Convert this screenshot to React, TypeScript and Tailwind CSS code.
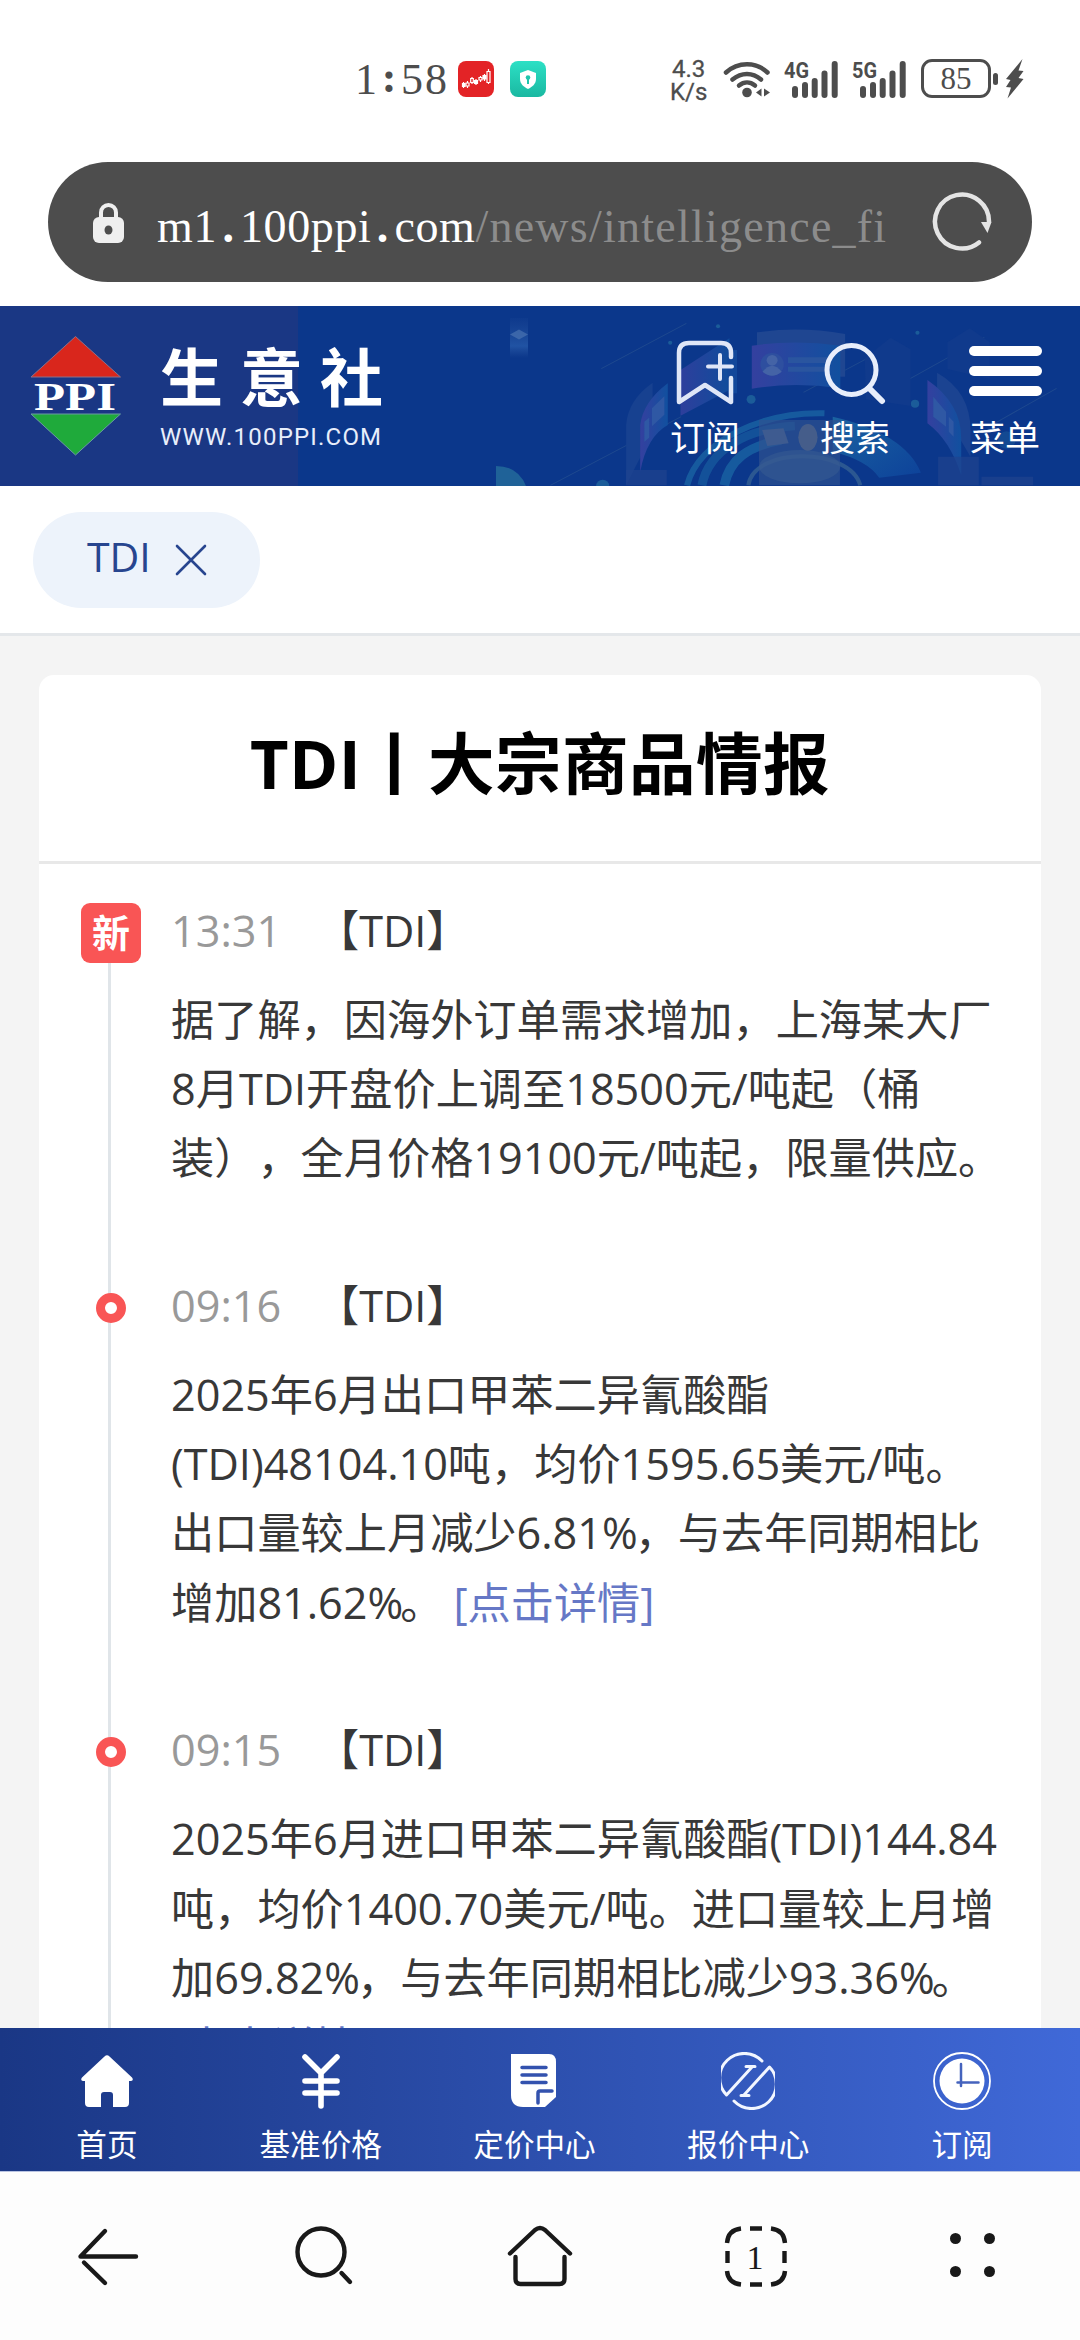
import { Fragment, type ReactNode } from 'react'

interface NewsItem {
  time: string
  isNew?: boolean
  lines: string[]
  link?: 'inline' | 'newline'
}

const NEWS: NewsItem[] = [
  {
    time: '13:31',
    isNew: true,
    lines: [
      '据了解，因海外订单需求增加，上海某大厂',
      '8月TDI开盘价上调至18500元/吨起（桶',
      '装），全月价格19100元/吨起，限量供应。',
    ],
  },
  {
    time: '09:16',
    lines: [
      '2025年6月出口甲苯二异氰酸酯',
      '(TDI)48104.10吨，均价1595.65美元/吨。',
      '出口量较上月减少6.81%，与去年同期相比',
      '增加81.62%。',
    ],
    link: 'inline',
  },
  {
    time: '09:15',
    lines: [
      '2025年6月进口甲苯二异氰酸酯(TDI)144.84',
      '吨，均价1400.70美元/吨。进口量较上月增',
      '加69.82%，与去年同期相比减少93.36%。',
    ],
    link: 'newline',
  },
]

function Signal({ label }: { label: string }) {
  return (
    <svg width="54" height="38" viewBox="0 0 54 38" fill="#4d4d4d">
      <text x="0" y="17" fontFamily="Roboto" fontSize="22" fontWeight="700" textLength="25" lengthAdjust="spacingAndGlyphs">
        {label}
      </text>
      <rect x="8" y="25" width="6" height="12" rx="3" />
      <rect x="18" y="21" width="6" height="16" rx="3" />
      <rect x="27.7" y="17" width="6" height="20" rx="3" />
      <rect x="37.5" y="9.5" width="6" height="27.5" rx="3" />
      <rect x="47.7" y="0" width="6" height="37" rx="3" />
    </svg>
  )
}

function StatusBar() {
  return (
    <div className="flex h-[162px] shrink-0 items-start pt-[58px] text-[#4d4d4d]">
      <div className="ml-[355px] flex h-[44px] w-[103px] items-center font-['Liberation_Serif',serif] text-[44px] leading-none">
        <span className="w-[22px]">1</span>
        <span className="w-[24px] pb-1 text-center font-bold">:</span>
        <span className="tracking-[2px]">58</span>
      </div>
      <svg className="mt-[3px]" width="36" height="36" viewBox="0 0 36 36">
        <rect width="36" height="36" rx="8" fill="#e32326" />
        <g fill="none" stroke="#fff" strokeWidth="1.2">
          <path d="M5.5 21v6M9.500 20v7M14 16v7M18 18v6M22.500 15v6M26.500 13v7M30.500 8v15" />
          <path d="M8 22h3v3H8zM12.700 17.500h2.600v4h-2.600zM21 16.500h3v2.500h-3zM29 10.500h3v11h-3z" fill="#e32326" />
          <path d="M4.500 22.500h2.500v3H4.500zM16.500 19.500h3v3h-3zM25 14.500h3v3.500h-3z" fill="#fff" />
        </g>
      </svg>
      <svg className="mt-[3px] ml-4" width="36" height="36" viewBox="0 0 36 36">
        <defs>
          <linearGradient id="shield" x1="0" y1="0" x2="0" y2="1">
            <stop offset="0" stopColor="#2ce0c5" />
            <stop offset="1" stopColor="#1ab8a1" />
          </linearGradient>
        </defs>
        <rect width="36" height="36" rx="8" fill="url(#shield)" />
        <path d="M18 9l8 3v6c0 5-4 8-8 10-4-2-8-5-8-10v-6z" fill="#fff" />
        <circle cx="18" cy="16.5" r="2.3" fill="#1fc5ad" />
        <rect x="17" y="17" width="2" height="6" fill="#1fc5ad" />
      </svg>
      <div className="ml-[124px] w-[42px] font-[Roboto,sans-serif] text-[24px] leading-[23px] [-webkit-text-stroke:0.3px_#4d4d4d]">
        <div className="pl-[2px]">4.3</div>
        <div>K/s</div>
      </div>
      <svg className="mt-[3px] ml-[11px]" width="48" height="38" viewBox="0 0 48 38" fill="none" stroke="#4d4d4d" strokeWidth="4.5" strokeLinecap="round">
        <path d="M3 11.500C15 .500 33 .500 44.500 11.500" />
        <path d="M9.500 18.500c9-7.500 20-7.500 28.500 0" />
        <path d="M16 24.500c5-4 11-4 16 0" />
        <circle cx="24" cy="31.5" r="4.8" fill="#4d4d4d" stroke="none" />
        <path d="M38.500 27.500v8l-5.500-4zM41 27.500v8l6-4z" fill="#4d4d4d" stroke="none" />
      </svg>
      <div className="mt-[3px] ml-[13px]">
        <Signal label="4G" />
      </div>
      <div className="mt-[3px] ml-[14px]">
        <Signal label="5G" />
      </div>
      <div className="mt-px ml-[15px] flex h-[39px] w-[70px] items-center justify-center rounded-[11px] border-[3px] border-[#4d4d4d] font-['Liberation_Serif',serif] text-[31px] leading-none">
        85
      </div>
      <div className="mt-[15px] ml-[2px] h-[12px] w-[5px] rounded-full bg-[#4d4d4d]" />
      <svg className="ml-[7px]" width="19" height="41" viewBox="0 0 19 41" fill="#4d4d4d">
        <path d="M17.500 1L1 21l4.500 1L1 29l5 .500L2.500 40.500 18.500 21l-5-1 5-7-5-.500z" />
      </svg>
    </div>
  )
}

function AddressBar() {
  return (
    <div className="mx-12 flex h-[120px] shrink-0 items-center rounded-full bg-[#4d4d4d]">
      <svg className="mt-[1px] ml-[45px]" width="31" height="40" viewBox="0 0 31 40">
        <path d="M8 16V9.500a7.500 7.500 0 0 1 15 0V16" fill="none" stroke="#efefef" strokeWidth="4" />
        <rect x="0" y="14" width="31" height="26" rx="6" fill="#efefef" />
        <ellipse cx="15.5" cy="27" rx="4" ry="4.5" fill="#4d4d4d" />
      </svg>
      <div className="mt-[10px] ml-[33px] flex w-[774px] font-['Liberation_Serif',serif] text-[46px] leading-none whitespace-nowrap">
        <span className="tracking-[0.6px] text-white">
          m1<span className="inline-block w-[23px] text-center font-bold">.</span>100ppi
          <span className="inline-block w-[23px] text-center font-bold">.</span>com
        </span>
        <span className="tracking-[1.25px] text-[#8c8c8c]">/news/intelligence_fi</span>
      </div>
      <svg className="-mt-px" width="62" height="62" viewBox="0 0 62 62">
        <path d="M48 51.500A27 27 0 1 1 58 31" fill="none" stroke="#e4e4e4" strokeWidth="4.5" strokeLinecap="round" />
        <path d="M50 31h10.500l-4 11z" fill="#e4e4e4" />
      </svg>
    </div>
  )
}

// faint illustration behind the right half of the site header
function HeaderArt() {
  return (
    <svg className="absolute top-0 right-0" width="540" height="180" viewBox="0 18 1568 540" preserveAspectRatio="none">
      <defs>
        <linearGradient id="screen" x1="0" y1="0" x2="1" y2="0">
          <stop offset="0" stopColor="#34409f" />
          <stop offset="1" stopColor="#11509f" />
        </linearGradient>
        <linearGradient id="wing" x1="0" y1="0" x2="1" y2="1">
          <stop offset="0" stopColor="#1a62a0" />
          <stop offset="1" stopColor="#0d429a" />
        </linearGradient>
      </defs>
      <g stroke="#2b5592" strokeWidth="3" opacity=".6">
        <path d="M178 206L425 70M30 556L410 350M765 277L1010 142M1050 250L1290 112M1320 370L1500 265" />
      </g>
      <path d="M630 97Q755 78 886 102V230H630z" fill="#1f4691" />
      <path d="M615 137Q740 118 872 137V265Q740 245 615 266z" fill="url(#screen)" />
      <circle cx="674" cy="193" r="34" fill="#2e4f9f" />
      <circle cx="674" cy="181" r="16" fill="#4463a6" />
      <path d="M646 215q28-36 56 0-28 24-56 0z" fill="#4463a6" />
      <path d="M720 172h120v17H720zM720 200h120v15H720z" fill="#2a559f" />
      <path d="M408 210L550 115V270L408 347z" fill="url(#screen)" opacity=".85" />
      <path d="M545 150h27v130h-27z" fill="#12479a" />
      <path d="M250 375Q255 300 327 248V400L250 556z" fill="#174190" />
      <path d="M291 375Q300 305 371 250V375Q310 410 291 515z" fill="url(#screen)" />
      <path d="M325 325l36-36v55l-36 35zM303 365l14-12v60l-14 12z" fill="#2f58a4" />
      <path d="M1153 218Q1250 275 1250 390V470L1153 300z" fill="#1b4391" />
      <path d="M1125 240Q1223 310 1223 415V525Q1190 420 1125 370z" fill="url(#screen)" />
      <path d="M1142 290l37 45v45l-37-30zM1187 350l14 15v45l-14-15z" fill="#2f58a4" />
      <g fill="none" stroke="#1961a2" opacity=".85">
        <path d="M826 340C650 335 460 420 427 556" strokeWidth="18" />
        <path d="M740 378C600 385 490 450 470 556" strokeWidth="26" opacity=".75" />
        <path d="M700 420C600 440 550 480 535 556" strokeWidth="28" />
        <path d="M605 556C620 440 900 440 930 556" strokeWidth="12" stroke="#315d93" />
      </g>
      <path d="M850 350Q1060 400 1106 518L985 533Q950 480 850 455z" fill="url(#wing)" />
      <path d="M636 360h235v196H636z" fill="#315391" opacity=".65" />
      <ellipse cx="754" cy="500" rx="118" ry="50" fill="#395d92" opacity=".5" />
      <ellipse cx="778" cy="412" rx="28" ry="40" fill="#4d638a" opacity=".8" />
      <path d="M645 390l62-5 15 45-62 8z" fill="#3e5b90" />
      <path d="M943 175l75-62 58 35v170l-130-20zM1183 127l65-42 58 42v110l-123-30z" fill="#103a8c" />
      <path d="M250 510h118v46H250zM1156 470h118v86h-118zM1282 530h150v26h-150z" fill="#1f438f" opacity=".7" />
      <g fill="#1b5c99">
        <circle cx="613" cy="298" r="13" />
        <circle cx="1089" cy="311" r="12" />
        <circle cx="182" cy="558" r="19" />
        <circle cx="517" cy="79" r="6" />
        <circle cx="378" cy="128" r="6" />
        <circle cx="1096" cy="98" r="6" />
        <circle cx="1355" cy="420" r="26" opacity=".5" />
      </g>
    </svg>
  )
}

function HeaderAction({ label, children }: { label: string; children: ReactNode }) {
  return (
    <button className="flex w-[150px] flex-col items-center">
      <span className="flex h-[68px] items-center">{children}</span>
      <span className="mt-[8px] text-[35px] leading-[46px] text-white">{label}</span>
    </button>
  )
}

function SiteHeader() {
  return (
    <header className="relative mt-6 flex h-[180px] shrink-0 overflow-hidden bg-[#0b378b]">
      <HeaderArt />
      <div className="absolute top-0 left-0 h-full w-[298px] bg-[#1a3784]" />
      <svg className="absolute top-0 left-[490px]" width="50" height="180" viewBox="0 0 50 180">
        <defs>
          <linearGradient id="beam" x1="0" y1="0" x2="0" y2="1">
            <stop offset="0" stopColor="#2a559f" stopOpacity="0.1" />
            <stop offset="0.7" stopColor="#2a5fae" stopOpacity="0.7" />
            <stop offset="1" stopColor="#2a559f" stopOpacity="0" />
          </linearGradient>
        </defs>
        <path d="M20 12h18v40H20z" fill="url(#beam)" />
        <path d="M20 28.500l9-5 9 5-9 5z" fill="#4a73b0" opacity=".7" />
        <path d="M6 160q22 0 30 20H6z" fill="#1f6298" />
      </svg>
      <svg className="relative mt-[30px] ml-[30px]" width="92" height="120" viewBox="0 0 92 120">
        <path d="M45.500 .500L90.500 41H1z" fill="#d9261c" stroke="#8d7089" strokeWidth="1" />
        <path d="M1 78h89.500L45.500 119z" fill="#1faa3b" stroke="#6c9aa5" strokeWidth="1" />
        <text x="4" y="74" fill="#fff" fontFamily="Liberation Serif" fontWeight="700" fontSize="41" textLength="82" lengthAdjust="spacingAndGlyphs">
          PPI
        </text>
      </svg>
      <div className="relative ml-[38px] w-[470px]">
        <div className="mt-[26px] text-[63px] leading-[90px] font-bold tracking-[17px] text-white">生意社</div>
        <div className="font-[Roboto,sans-serif] text-[24px] leading-[30px] tracking-[1.2px] text-[#e8eefb]">WWW.100PPI.COM</div>
      </div>
      <div className="relative mt-[33px] flex">
        <HeaderAction label="订阅">
          <svg width="60" height="68" viewBox="0 0 60 68" fill="none" stroke="#dfe6f7" strokeWidth="4.5" strokeLinecap="round" strokeLinejoin="round">
            <path d="M56 18v-4q0-10-10-10H14Q4 4 4 14v49l26-17 26 17V39" />
            <path d="M45 16v24M33 27.500h24" strokeWidth="4" />
          </svg>
        </HeaderAction>
        <HeaderAction label="搜索">
          <svg width="62" height="64" viewBox="0 0 62 64" fill="none" stroke="#e8eefb" strokeWidth="5" strokeLinecap="round">
            <circle cx="27.5" cy="29" r="24.5" />
            <path d="M45 47l13 13" strokeWidth="6" />
          </svg>
        </HeaderAction>
        <HeaderAction label="菜单">
          <span className="-mt-1 flex w-[73px] flex-col gap-[10px]">
            <span className="h-[10px] rounded-full bg-white" />
            <span className="h-[10px] rounded-full bg-white" />
            <span className="h-[10px] rounded-full bg-white" />
          </span>
        </HeaderAction>
      </div>
    </header>
  )
}

function FilterBar() {
  return (
    <div className="h-[150px] shrink-0 border-b-[3px] border-[#e4e7ea] bg-white pt-[26px] pl-[33px]">
      <button className="flex h-[96px] w-[227px] items-center rounded-full bg-[#edf3fb] pl-[54px] text-[41px] leading-none text-[#27458f]">
        <span className="-mt-[7px] w-[88px] text-left">TDI</span>
        <svg width="32" height="32" viewBox="0 0 32 32" stroke="#27458f" strokeWidth="2.6" strokeLinecap="round">
          <path d="M2 2l28 28M30 2L2 30" />
        </svg>
      </button>
    </div>
  )
}

function DetailLink() {
  return <a className="text-[#6678c6]">[点击详情]</a>
}

// the percent sign of the Latin font is too wide beside CJK text, so it is tightened
function NewsLine({ text }: { text: string }) {
  return text.split('%').map((part, i) => (
    <Fragment key={i}>
      {i > 0 && <span className="tracking-[-3px]">%</span>}
      {part}
    </Fragment>
  ))
}

function TimelineItem({ item }: { item: NewsItem }) {
  return (
    <li className="flex pb-[78.6px]">
      <div className="relative w-[132px] shrink-0">
        {item.isNew ? (
          <span className="absolute top-[7px] left-[42px] flex h-[60px] w-[60px] items-center justify-center rounded-[9px] bg-[#f95555] pb-[3px] text-[38px] leading-none font-bold text-white">
            新
          </span>
        ) : (
          <span className="absolute top-[22px] left-[57px] h-[30px] w-[30px] rounded-full border-[9px] border-[#f95555] bg-white" />
        )}
      </div>
      <div className="text-[43.2px] leading-[69.12px] whitespace-nowrap text-[#383838] [text-spacing-trim:space-all]">
        <div className="flex">
          <span className="w-[145px] text-[#999]">{item.time}</span>
          <span>【TDI】</span>
        </div>
        <div className="mt-5">
          {item.lines.map((line, i) => (
            <div key={i}>
              <NewsLine text={line} />
              {item.link === 'inline' && i === item.lines.length - 1 && (
                <span className="ml-[10px]">
                  <DetailLink />
                </span>
              )}
            </div>
          ))}
          {item.link === 'newline' && <DetailLink />}
        </div>
      </div>
    </li>
  )
}

function NewsCard() {
  return (
    <main className="min-h-0 flex-1 overflow-hidden bg-[#f4f4f4] px-[39px] pt-[39px]">
      <section className="rounded-t-[15px] bg-white">
        <h1 className="h-[189px] border-b-[3px] border-[#e8e8e8] pt-[39px] text-center text-[66.6px] leading-[100px] font-bold tracking-[0.4px] text-black">
          TDI丨大宗商品情报
        </h1>
        <div className="relative pt-[32px]">
          <div className="absolute top-[60px] bottom-0 left-[69px] w-[3px] bg-[#e0e5e9]" />
          <ul>
            {NEWS.map((item) => (
              <TimelineItem key={item.time} item={item} />
            ))}
          </ul>
        </div>
      </section>
    </main>
  )
}

const SITE_TABS: { label: string; icon: ReactNode }[] = [
  {
    label: '首页',
    icon: (
      <svg width="52" height="58" viewBox="0 0 52 58" fill="#fff">
        <path d="M23.500 4.500q2.500-2.500 5 0l22.500 21q2 3-1 3.500H48v22q0 4-4 4H32V43q0-3-3-3h-6q-3 0-3 3v12H8q-4 0-4-4V29H2q-3-.500-1-3.500z" />
      </svg>
    ),
  },
  {
    label: '基准价格',
    icon: (
      <svg width="40" height="58" viewBox="0 0 40 58" fill="none" stroke="#fff" strokeWidth="5.6" strokeLinecap="round" strokeLinejoin="round">
        <path d="M4 5l16 16L36 5M20 21v33M4 29h32M4 41h32" />
      </svg>
    ),
  },
  {
    label: '定价中心',
    icon: (
      <svg width="46" height="58" viewBox="0 0 46 58">
        <path d="M0 2h38q7 0 7 8v35L34 55H12Q0 55 0 43z" fill="#fff" />
        <path d="M11 15.500h24M11 23h24M11 30.500h24" stroke="#3352ae" strokeWidth="3.5" strokeLinecap="round" />
        <path d="M41 39H29q-2 0-2 2v10" fill="none" stroke="#3352ae" strokeWidth="3.5" strokeLinecap="round" />
      </svg>
    ),
  },
  {
    label: '报价中心',
    icon: (
      <svg width="54" height="58" viewBox="0 0 54 58" fill="none" stroke="#f2f6ff" strokeWidth="3" strokeLinecap="round" strokeLinejoin="round">
        <path d="M41 9A24.500 24.500 0 0 0 5.500 43L31 15M25 14.500h9" />
        <path d="M13 49A24.500 24.500 0 0 0 48.500 15L23 43M20 43.500h8" />
      </svg>
    ),
  },
  {
    label: '订阅',
    icon: (
      <svg width="58" height="58" viewBox="0 0 58 58">
        <circle cx="29" cy="29" r="28" fill="none" stroke="#fff" strokeWidth="1.8" />
        <circle cx="29" cy="29" r="22.5" fill="#fff" />
        <path d="M28 12v22M24.500 30.500h21" stroke="#4563bd" strokeWidth="2.5" strokeLinecap="round" />
      </svg>
    ),
  },
]

function SiteTabs() {
  return (
    <nav className="h-[144px] shrink-0 border-b border-[#b9c4e2] bg-linear-to-r from-[#1a3785] to-[#4069d8]">
      <div className="flex w-[1069px] pt-6">
        {SITE_TABS.map((tab) => (
          <button key={tab.label} className="flex flex-1 flex-col items-center">
            {tab.icon}
            <span className="mt-[14px] text-[30.6px] leading-[40px] text-white">{tab.label}</span>
          </button>
        ))}
      </div>
    </nav>
  )
}

function BrowserNav() {
  const cell = 'flex flex-1 items-center justify-center'
  const stroke = { fill: 'none', stroke: '#191919', strokeWidth: 4.4, strokeLinecap: 'round', strokeLinejoin: 'round' } as const
  return (
    <nav className="flex h-[168px] shrink-0 bg-[#fdfdfd] pt-[2px]">
      <div className={cell}>
        <svg width="64" height="64" viewBox="0 0 64 64" {...stroke}>
          <path d="M60 31.500H4.500L29 6M8 37.500L29 58" />
        </svg>
      </div>
      <div className={cell}>
        <svg width="64" height="64" viewBox="0 0 64 64" {...stroke}>
          <circle cx="29" cy="27" r="23.5" />
          <path d="M49.500 48L58 57" />
        </svg>
      </div>
      <div className={cell}>
        <svg width="68" height="64" viewBox="0 0 68 64" {...stroke}>
          <path d="M4 28.500L29 5q5-4 10 0l25 23.500M9.500 32v22q0 5 5 5h39q5 0 5-5V32" />
        </svg>
      </div>
      <div className={cell}>
        <svg width="64" height="64" viewBox="0 0 64 64" {...stroke} strokeLinecap="butt">
          <path d="M3 18Q4 5 17 3.500M47 3.500Q60 5 61 18M61 46q-1 12-14 13.500M17 59.500Q4 58 3 46" />
          <path d="M26 3.500h12M26 59.500h12M3.500 26v12M60.500 26v12" />
          <text x="31" y="43.5" textAnchor="middle" fontFamily="Liberation Serif" fontSize="34" fill="#191919" stroke="none">
            1
          </text>
        </svg>
      </div>
      <div className={cell}>
        <div className="-mt-1 grid grid-cols-2 gap-x-[23px] gap-y-[22px]">
          {[0, 1, 2, 3].map((n) => (
            <span key={n} className="h-[11px] w-[11px] rounded-full bg-[#191919]" />
          ))}
        </div>
      </div>
    </nav>
  )
}

export default function App() {
  return (
    <div
      lang="zh-CN"
      className="flex h-[2340px] w-[1080px] flex-col overflow-hidden bg-white font-['Open_Sans','Noto_Sans_CJK_SC',sans-serif]"
    >
      <StatusBar />
      <AddressBar />
      <SiteHeader />
      <FilterBar />
      <NewsCard />
      <SiteTabs />
      <BrowserNav />
    </div>
  )
}
